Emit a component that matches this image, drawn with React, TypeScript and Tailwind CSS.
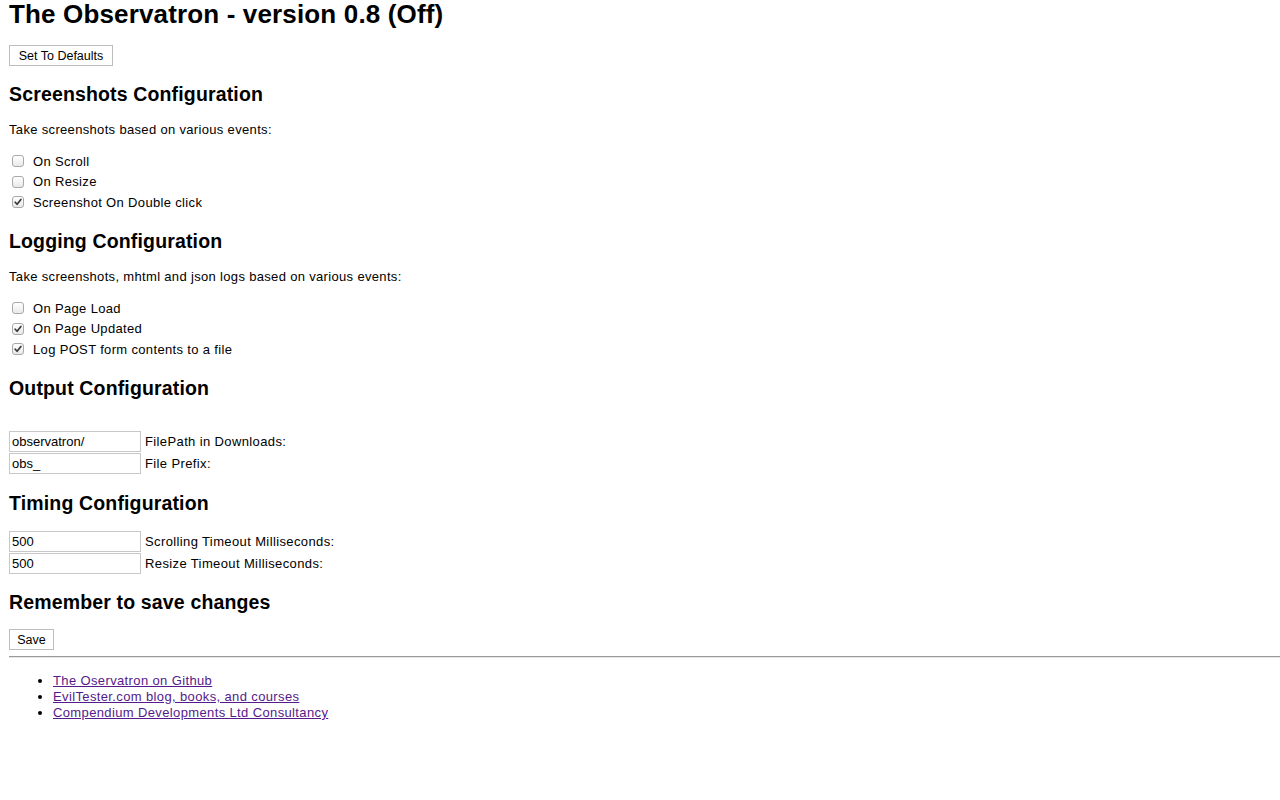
import React from "react";

function Check({ checked }: { checked: boolean }) {
  return (
    <div className="ml-[3px] w-[12px] h-[12px] rounded-[3px] border border-[#a9a9a9] bg-gradient-to-b from-white to-[#e9e9e9] flex items-center justify-center shrink-0">
      {checked && (
        <svg width="10" height="10" viewBox="0 0 10 10">
          <path d="M2.2 5.2 L4.1 7.3 L7.9 2.4" fill="none" stroke="#3a3a3a" strokeWidth="1.7" strokeLinecap="round" strokeLinejoin="round" />
        </svg>
      )}
    </div>
  );
}

function CheckRow({ label, checked }: { label: string; checked: boolean }) {
  return (
    <div className="h-[20.5px] flex items-center">
      <Check checked={checked} />
      <span className="ml-[9px] text-[13px] leading-[15px] tracking-[0.34px]">{label}</span>
    </div>
  );
}

function H2({ children, mt }: { children: React.ReactNode; mt: string }) {
  return <h2 className={`${mt} text-[19.5px] leading-[23px] font-bold tracking-[0.15px]`}>{children}</h2>;
}

function InputRow({ value, label, mt }: { value: string; label: string; mt: string }) {
  return (
    <div className={`${mt} flex items-center h-[21px]`}>
      <input
        defaultValue={value}
        className="w-[132px] h-[21px] border border-[#c8c8c8] px-[2px] text-[13px] leading-[15px] text-black bg-white outline-none"
      />
      <span className="ml-[4px] text-[13px] leading-[15px] tracking-[0.38px]">{label}</span>
    </div>
  );
}

export default function App() {
  return (
    <div
      className="min-h-[800px] bg-white text-black pl-[9px] flex flex-col items-start overflow-hidden"
      style={{ fontFamily: '"Liberation Sans", Arial, Helvetica, sans-serif' }}
    >
      <h1 className="text-[26px] leading-[28px] font-bold tracking-[0.15px]">The Observatron - version 0.8 (Off)</h1>

      <button className="mt-[17px] h-[21px] w-[104px] pt-[1px] border border-[#bdbdbd] bg-white text-[12.5px] leading-[15px] text-black flex items-center justify-center">
        Set To Defaults
      </button>

      <H2 mt="mt-[17px]">Screenshots Configuration</H2>
      <p className="mt-[16px] text-[13px] leading-[15px] tracking-[0.33px]">Take screenshots based on various events:</p>
      <div className="mt-[14px] flex flex-col">
        <CheckRow label="On Scroll" checked={false} />
        <CheckRow label="On Resize" checked={false} />
        <CheckRow label="Screenshot On Double click" checked={true} />
      </div>

      <H2 mt="mt-[17.5px]">Logging Configuration</H2>
      <p className="mt-[16px] text-[13px] leading-[15px] tracking-[0.33px]">Take screenshots, mhtml and json logs based on various events:</p>
      <div className="mt-[14px] flex flex-col">
        <CheckRow label="On Page Load" checked={false} />
        <CheckRow label="On Page Updated" checked={true} />
        <CheckRow label="Log POST form contents to a file" checked={true} />
      </div>

      <H2 mt="mt-[17px]">Output Configuration</H2>
      <InputRow mt="mt-[31px]" value="observatron/" label="FilePath in Downloads:" />
      <InputRow mt="mt-[1px]" value="obs_" label="File Prefix:" />

      <H2 mt="mt-[18px]">Timing Configuration</H2>
      <InputRow mt="mt-[16px]" value="500" label="Scrolling Timeout Milliseconds:" />
      <InputRow mt="mt-[1px]" value="500" label="Resize Timeout Milliseconds:" />

      <H2 mt="mt-[17px]">Remember to save changes</H2>
      <button className="mt-[15.5px] h-[21px] w-[45px] pt-[1px] border border-[#bdbdbd] bg-white text-[12.5px] leading-[15px] text-black flex items-center justify-center">
        Save
      </button>

      <div className="mt-[6px] self-stretch border-t border-t-[#9a9a9a] border-b border-b-[#e6e6e6]" />

      <ul className="mt-[15px] list-disc pl-[44px] text-[13px] leading-[16px] tracking-[0.37px]">
        <li>
          <a href="#" className="text-[#551a8b] underline">The Oservatron on Github</a>
        </li>
        <li>
          <a href="#" className="text-[#551a8b] underline">EvilTester.com blog, books, and courses</a>
        </li>
        <li>
          <a href="#" className="text-[#551a8b] underline">Compendium Developments Ltd Consultancy</a>
        </li>
      </ul>
    </div>
  );
}
